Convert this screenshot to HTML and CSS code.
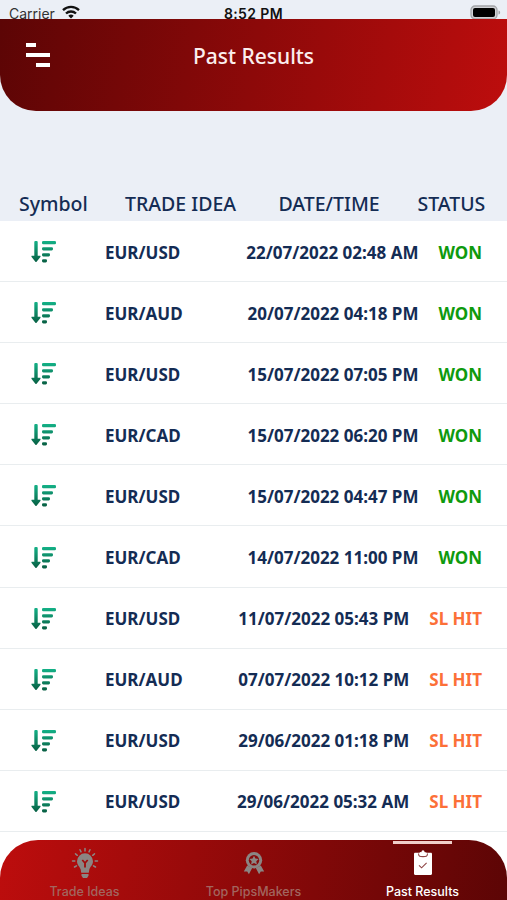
FILE: index.html
```html
<!DOCTYPE html>
<html lang="en">
<head>
    <meta charset="UTF-8">
    <meta name="viewport" content="width=device-width, initial-scale=1.0">
    <title>Past Results</title>
    <link rel="stylesheet" href="styles.css">
</head>
<body>
    <!-- Shared trend icon -->
    <svg class="defs" width="0" height="0">
        <defs>
            <linearGradient id="green" gradientUnits="userSpaceOnUse" x1="0" y1="0" x2="0" y2="23">
                <stop offset="0" stop-color="#14b58a"/>
                <stop offset="1" stop-color="#075c40"/>
            </linearGradient>
            <symbol id="trend" viewBox="0 0 26 24">
                <g fill="url(#green)">
                    <rect x="3.3" y="1" width="3.4" height="18" rx="1"/>
                    <path d="M1 15.8h8c.6 0 .8.7.4 1.1L5.6 21.8c-.4.4-.8.4-1.2 0L.6 16.9c-.4-.4-.2-1.1.4-1.1z"/>
                    <rect x="11" y="1" width="14" height="3.2" rx="1.3"/>
                    <rect x="11" y="7.2" width="11" height="3.2" rx="1.3"/>
                    <rect x="11" y="13.2" width="8" height="3.2" rx="1.3"/>
                    <rect x="11" y="19.2" width="5" height="3.2" rx="1.3"/>
                </g>
            </symbol>
        </defs>
    </svg>

    <div class="screen">
        <!-- Status bar -->
        <div class="status-bar">
            <div class="carrier">
                <span>Carrier</span>
                <svg width="18" height="14" viewBox="0 0 18 14" fill="none" stroke="#111" stroke-width="2.3">
                    <path d="M1 5.2a11.5 11.5 0 0 1 16 0"/>
                    <path d="M4 8.5a7.2 7.2 0 0 1 10 0"/>
                    <path d="M9 13.5L6.3 10.7a4 4 0 0 1 5.4 0z" fill="#111" stroke="none"/>
                </svg>
            </div>
            <span class="time">8:52 PM</span>
            <div class="battery">
                <svg width="31" height="15" viewBox="0 0 31 15">
                    <rect x="1" y="1" width="26" height="13" rx="4" fill="#d0d2d6" stroke="#a2a4a8" stroke-width="1.3"/>
                    <rect x="3" y="3" width="22" height="9" rx="2" fill="#000"/>
                    <path d="M28.5 5.5c2.2.6 2.2 3.4 0 4z" fill="#a2a4a8"/>
                </svg>
            </div>
        </div>

        <!-- Header -->
        <header class="header">
            <svg class="menu" width="24" height="24" viewBox="0 0 24 24" fill="#fff">
                <rect x="0" y="0" width="10" height="4"/>
                <rect x="0" y="10" width="24" height="4"/>
                <rect x="10" y="20" width="14" height="4"/>
            </svg>
            <h1>Past Results</h1>
        </header>

        <div class="columns">
            <span>Symbol</span>
            <span>TRADE IDEA</span>
            <span>DATE/TIME</span>
            <span>STATUS</span>
        </div>

        <!-- Results -->
        <div class="list">
            <div class="row">
                <svg class="trend"><use href="#trend"/></svg>
                <span class="pair">EUR/USD</span>
                <span class="date">22/07/2022 02:48 AM</span>
                <span class="status won">WON</span>
            </div>
            <div class="row">
                <svg class="trend"><use href="#trend"/></svg>
                <span class="pair">EUR/AUD</span>
                <span class="date">20/07/2022 04:18 PM</span>
                <span class="status won">WON</span>
            </div>
            <div class="row">
                <svg class="trend"><use href="#trend"/></svg>
                <span class="pair">EUR/USD</span>
                <span class="date">15/07/2022 07:05 PM</span>
                <span class="status won">WON</span>
            </div>
            <div class="row">
                <svg class="trend"><use href="#trend"/></svg>
                <span class="pair">EUR/CAD</span>
                <span class="date">15/07/2022 06:20 PM</span>
                <span class="status won">WON</span>
            </div>
            <div class="row">
                <svg class="trend"><use href="#trend"/></svg>
                <span class="pair">EUR/USD</span>
                <span class="date">15/07/2022 04:47 PM</span>
                <span class="status won">WON</span>
            </div>
            <div class="row">
                <svg class="trend"><use href="#trend"/></svg>
                <span class="pair">EUR/CAD</span>
                <span class="date">14/07/2022 11:00 PM</span>
                <span class="status won">WON</span>
            </div>
            <div class="row">
                <svg class="trend"><use href="#trend"/></svg>
                <span class="pair">EUR/USD</span>
                <span class="date">11/07/2022 05:43 PM</span>
                <span class="status hit">SL HIT</span>
            </div>
            <div class="row">
                <svg class="trend"><use href="#trend"/></svg>
                <span class="pair">EUR/AUD</span>
                <span class="date">07/07/2022 10:12 PM</span>
                <span class="status hit">SL HIT</span>
            </div>
            <div class="row">
                <svg class="trend"><use href="#trend"/></svg>
                <span class="pair">EUR/USD</span>
                <span class="date">29/06/2022 01:18 PM</span>
                <span class="status hit">SL HIT</span>
            </div>
            <div class="row">
                <svg class="trend"><use href="#trend"/></svg>
                <span class="pair">EUR/USD</span>
                <span class="date">29/06/2022 05:32 AM</span>
                <span class="status hit">SL HIT</span>
            </div>
        </div>

        <!-- Tab bar -->
        <nav class="tabs">
            <a class="tab" href="#">
                <svg width="28" height="32" viewBox="0 0 28 32">
                    <g stroke="#8b8583" stroke-width="1.5" stroke-linecap="round">
                        <path d="M14 1.5v2.5M9 2.7l1 2.2M19 2.7l-1 2.2M4.5 6.8l1.8 1.5M23.5 6.8l-1.8 1.5M1.5 14h2.3M24.2 14h2.3M3.5 20l2-1.2M24.5 20l-2-1.2"/>
                    </g>
                    <path fill="#8b8583" d="M14 6.3a8 8 0 0 0-8 8c0 3.8 2.8 5.2 3.7 8.2l.5 3.2h7.6l.5-3.2c.9-3 3.7-4.4 3.7-8.2a8 8 0 0 0-8-8z"/>
                    <path fill="#8b8583" d="M10.5 27h7v1.7l-1.5 2.3h-4l-1.5-2.3z"/>
                    <path fill="none" stroke="#a00b0b" stroke-width="1.8" d="M11.3 13l2.7 3 2.7-3M14 16v4.5"/>
                </svg>
                <span>Trade Ideas</span>
            </a>
            <a class="tab" href="#">
                <svg width="22" height="24" viewBox="0 0 22 24" fill="#8b8583">
                    <path d="M4.2 14.5L.8 20.5l3.4-.1 1.7 2.8 3.3-6.2zM17.8 14.5l3.4 6-3.4-.1-1.7 2.8-3.3-6.2z"/>
                    <circle cx="11" cy="9.3" r="8.2"/>
                    <circle cx="11" cy="9.3" r="5.2" fill="#850909"/>
                    <path d="M11 4.7l1.4 2.9 3.2.4-2.3 2.2.6 3.2-2.9-1.5-2.9 1.5.6-3.2L6.4 8l3.2-.4z"/>
                </svg>
                <span>Top PipsMakers</span>
            </a>
            <a class="tab active" href="#">
                <svg width="18" height="24" viewBox="0 0 18 24">
                    <path fill="#fff" d="M1.2 1.8h4C5.6 1.3 7.4 1.6 7.5.8a1.5 1.5 0 0 1 3 0c.1.8 1.9.5 2.3 1h4c.7 0 1.2.5 1.2 1.2v19.8c0 .7-.5 1.2-1.2 1.2H1.2C.5 24 0 23.5 0 22.8V3c0-.7.5-1.2 1.2-1.2z"/>
                    <path fill="none" stroke="#8e4545" stroke-width="1.1" d="M4.5 2.6c0 3 1.6 3 4.5 3s4.5 0 4.5-3M5 14.3l2.6 2.5 5-5"/>
                </svg>
                <span>Past Results</span>
            </a>
        </nav>
    </div>
</body>
</html>
```
FILE: styles.css
```css
body {
    font-family: "Noto Sans", "Open Sans", sans-serif;
    background-color: #ebeff6;
    color: #142c54;
    margin: 0;
    padding: 0;
}

.defs {
    display: block;
}

.screen {
    width: 507px;
    height: 900px;
    display: flex;
    flex-direction: column;
    overflow: hidden;
}

.status-bar {
    display: grid;
    grid-template-columns: 1fr auto 1fr;
    height: 19px;
    flex-shrink: 0;
    padding: 5px 6px 0 9px;
    box-sizing: border-box;
    font-family: Inter, "Liberation Sans", sans-serif;
    font-size: 14px;
    line-height: 18px;
    color: #333;
}

.carrier {
    display: flex;
    gap: 7px;
}

.time {
    font-weight: 600;
    letter-spacing: 0.4px;
    margin-right: 3px;
    color: #111;
}

.battery {
    display: flex;
    justify-content: flex-end;
}

.header {
    display: grid;
    grid-template-columns: 100px 1fr 100px;
    height: 92px;
    flex-shrink: 0;
    box-sizing: border-box;
    padding-top: 24px;
    align-items: start;
    background: linear-gradient(100deg, #5c0505, #bd0d0d);
    border-radius: 0 0 36px 36px;
}

.menu {
    margin-left: 26px;
}

h1 {
    margin: 0;
    text-align: center;
    font-size: 21px;
    font-weight: 500;
    line-height: 26px;
    color: #fbeeee;
}

.columns {
    display: grid;
    grid-template-columns: 106px 153.5px 139px 1fr;
    margin-top: 75px;
    padding-left: 19px;
    height: 35px;
    flex-shrink: 0;
    font-size: 19.5px;
    font-weight: 500;
    line-height: 36px;
    white-space: nowrap;
}

/* Runs on under the rounded corners of the tab bar */
.list {
    flex: 1;
    margin-bottom: -40px;
    background: #fff;
    overflow: hidden;
}

.row {
    display: flex;
    align-items: center;
    height: 61.1px;
    box-sizing: border-box;
    padding: 2px 25px 0 31px;
    border-bottom: 1px solid #e9edef;
    font-size: 17px;
    font-weight: 700;
    white-space: nowrap;
}

.trend {
    width: 26px;
    height: 24px;
    margin-right: 48px;
}

.date {
    margin-left: auto;
}

.status {
    margin-left: 20px;
}

.won {
    color: #0e9a0e;
}

.hit {
    color: #fc7038;
}

.tabs {
    display: grid;
    grid-template-columns: repeat(3, 1fr);
    height: 60px;
    flex-shrink: 0;
    position: relative;
    background: linear-gradient(100deg, #bd0d0d, #5c0505);
    border-radius: 38px 38px 0 0;
}

.tab {
    display: flex;
    flex-direction: column;
    align-items: center;
    position: relative;
    color: #a2655f;
    font-family: Inter, "Liberation Sans", sans-serif;
    font-size: 12.5px;
    font-weight: 500;
    line-height: 16px;
    text-decoration: none;
}

.tab svg {
    height: 42px;
    margin-top: 2px;
}

.tab.active {
    color: #fff;
}

/* Indicator over the selected tab */
.tab.active::before {
    content: "";
    position: absolute;
    top: 1px;
    width: 59px;
    height: 3px;
    background: #f0cfca;
}
```
